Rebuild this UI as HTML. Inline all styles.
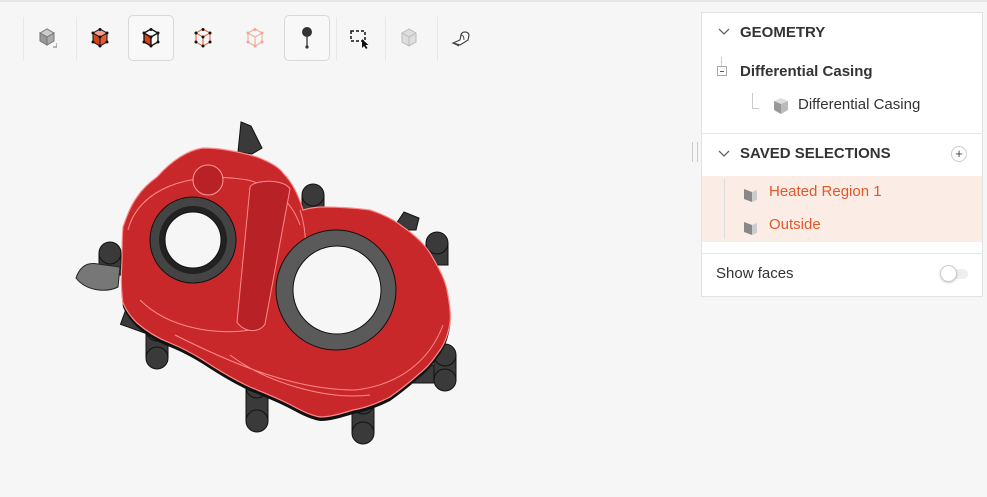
<!DOCTYPE html>
<html><head><meta charset="utf-8"><style>
body{margin:0;width:987px;height:497px;background:#f6f6f6;font-family:"Liberation Sans",sans-serif;overflow:hidden;position:relative}
.top{position:absolute;left:0;top:0;width:987px;height:2px;background:#e6e6e6}
.tb{position:absolute;top:15px;height:46px;width:46px;display:flex;align-items:center;justify-content:center}
.sel{border:1px solid #d8d8d8;border-radius:5px;background:#f8f8f8;width:44px;height:44px}
.sep{position:absolute;top:17px;width:1px;height:44px;background:#e8e8e8}
.panel{position:absolute;left:701px;top:12px;width:280px;height:283px;background:#fff;border:1px solid #e2e2e2}
.h{position:absolute;font-weight:bold;font-size:15px;color:#333}
.t{position:absolute;font-size:15px;color:#333}
.o{color:#e2572b}
</style></head><body>
<div class="top"></div>
<div class="sep" style="left:23px"></div><div class="sep" style="left:76px"></div><div class="sep" style="left:336px"></div><div class="sep" style="left:385px"></div><div class="sep" style="left:437px"></div>
<div class="tb" style="left:24px"><svg width="20" height="22" viewBox="0 0 20 22"><path d="M3 6l7-4 7 4-7 4z" fill="#ccc" stroke="#777"/><path d="M3 6v8l7 4v-8z" fill="#999" stroke="#777"/><path d="M17 6v8l-7 4v-8z" fill="#aaa" stroke="#777"/><path d="M16 20h4v-4" fill="none" stroke="#777"/></svg></div>
<div class="tb" style="left:77px"><svg width="20" height="20" viewBox="0 0 20 20"><path d="M3 5l7-4 7 4-7 4z" fill="#f0a090"/><path d="M3 5v9l7 4V9z" fill="#d4441c"/><path d="M17 5v9l-7 4V9z" fill="#e25a3a"/><g fill="#111"><circle cx="3" cy="5" r="1.5"/><circle cx="10" cy="1.5" r="1.5"/><circle cx="17" cy="5" r="1.5"/><circle cx="10" cy="9" r="1.5"/><circle cx="3" cy="14" r="1.5"/><circle cx="17" cy="14" r="1.5"/><circle cx="10" cy="18" r="1.5"/></g><path d="M3 5l7-4 7 4v9l-7 4-7-4z M3 5l7 4 7-4 M10 9v9" fill="none" stroke="#111"/></svg></div>
<div class="tb sel" style="left:128px"><svg width="20" height="20" viewBox="0 0 20 20"><path d="M3 5v9l7 4V9z" fill="#d4441c"/><path d="M3 5l7-4 7 4v9l-7 4-7-4z M3 5l7 4 7-4 M10 9v9" fill="none" stroke="#111" stroke-width="1.3"/><g fill="#111"><circle cx="3" cy="5" r="1.5"/><circle cx="10" cy="1.5" r="1.5"/><circle cx="17" cy="5" r="1.5"/><circle cx="10" cy="9" r="1.5"/><circle cx="3" cy="14" r="1.5"/><circle cx="17" cy="14" r="1.5"/><circle cx="10" cy="18" r="1.5"/></g></svg></div>
<div class="tb" style="left:180px"><svg width="20" height="20" viewBox="0 0 20 20"><path d="M3 5l7-4 7 4v9l-7 4-7-4z M3 5l7 4 7-4 M10 9v9" fill="none" stroke="#e2572b"/><g fill="#111"><circle cx="3" cy="5" r="1.5"/><circle cx="10" cy="1.5" r="1.5"/><circle cx="17" cy="5" r="1.5"/><circle cx="10" cy="9" r="1.5"/><circle cx="3" cy="14" r="1.5"/><circle cx="17" cy="14" r="1.5"/><circle cx="10" cy="18" r="1.5"/></g></svg></div>
<div class="tb" style="left:232px"><svg width="20" height="20" viewBox="0 0 20 20"><path d="M3 5l7-4 7 4v9l-7 4-7-4z M3 5l7 4 7-4 M10 9v9" fill="none" stroke="#eaa590"/><g fill="#f0a890"><circle cx="3" cy="5" r="1.5"/><circle cx="10" cy="1.5" r="1.5"/><circle cx="17" cy="5" r="1.5"/><circle cx="3" cy="14" r="1.5"/><circle cx="17" cy="14" r="1.5"/><circle cx="10" cy="18" r="1.5"/></g></svg></div>
<div class="tb sel" style="left:284px"><svg width="14" height="24" viewBox="0 0 14 24"><circle cx="7" cy="6" r="5" fill="#333"/><path d="M7 11v10" stroke="#333" stroke-width="1.3"/><circle cx="7" cy="21" r="1.6" fill="#333"/></svg></div>
<div class="tb" style="left:337px"><svg width="22" height="22" viewBox="0 0 22 22"><rect x="2" y="4" width="14" height="10" fill="none" stroke="#111" stroke-width="1.5" stroke-dasharray="3 2"/><path d="M13 12l0 9 2-2 2 3 1.5-1-2-3 3 0z" fill="#111"/></svg></div>
<div class="tb" style="left:386px"><svg width="20" height="20" viewBox="0 0 20 20"><path d="M3 5l7-4 7 4v9l-7 4-7-4z" fill="#ddd" stroke="#bbb"/><path d="M3 5l7 4 7-4M10 9v9" fill="none" stroke="#bbb"/></svg></div>
<div class="tb" style="left:438px"><svg width="22" height="20" viewBox="0 0 22 20"><path d="M3 15l7-3 1-5c1-4 7-4 8 0l-1 5-8 5z" fill="#fff" stroke="#444" stroke-width="1.2"/><path d="M11 7c2 0 3 2 3 5M3 15l6 3" fill="none" stroke="#444"/></svg></div>

<svg style="position:absolute;left:0;top:0" width="690" height="497">
<g fill="#3a3a3a" stroke="#111">
<path d="M238 152l3-30 10 4 11 22-10 6z"/>
<path d="M396 224l8-12 15 6-3 12-18 0z"/>
<rect x="123" y="310" width="30" height="20" transform="rotate(20 138 320)"/>
<rect x="408" y="365" width="30" height="18"/>
<g><rect x="99" y="253" width="22" height="22"/><circle cx="110" cy="253" r="11"/></g>
<g><rect x="302" y="195" width="22" height="16"/><circle cx="313" cy="195" r="11"/></g>
<g><rect x="426" y="243" width="22" height="22"/><circle cx="437" cy="243" r="11"/></g>
<g><rect x="146" y="330" width="22" height="28"/><circle cx="157" cy="358" r="11"/><circle cx="157" cy="330" r="11"/></g>
<g><rect x="434" y="355" width="22" height="25"/><circle cx="445" cy="380" r="11"/><circle cx="445" cy="355" r="11"/></g>
<g><rect x="246" y="387" width="22" height="34"/><circle cx="257" cy="421" r="11"/><circle cx="257" cy="387" r="11"/></g>
<g><rect x="352" y="403" width="22" height="30"/><circle cx="363" cy="433" r="11"/><circle cx="363" cy="403" r="11"/></g>
</g>
<path d="M76 278c4-12 12-16 22-14l22 3-2 20c-12 6-32 4-42-9z" fill="#777" stroke="#222"/>
<path d="M203 148C220 148 240 152 257 157C270 162 280 168 283 173C290 180 297 190 303 210C310 208 318 207 323 207C340 207 355 208 370 210C385 215 395 220 403 227C415 235 425 245 430 253C440 270 445 280 447 290C450 305 451 315 450 323C448 335 445 343 440 350C433 360 428 367 420 373C410 382 400 390 390 397C378 403 365 408 353 410C340 414 330 417 320 417C308 415 297 408 287 403C275 397 262 392 250 387C235 380 218 370 203 360C190 352 180 347 170 343C155 337 145 330 137 323C130 316 126 310 123 303C121 290 121 275 122 260C122 248 122 237 123 227C127 215 131 205 137 197C143 188 150 182 157 177C165 168 172 162 180 157C188 152 195 149 203 148Z" fill="#111" transform="translate(0,4)"/>
<path d="M203 148C220 148 240 152 257 157C270 162 280 168 283 173C290 180 297 190 303 210C310 208 318 207 323 207C340 207 355 208 370 210C385 215 395 220 403 227C415 235 425 245 430 253C440 270 445 280 447 290C450 305 451 315 450 323C448 335 445 343 440 350C433 360 428 367 420 373C410 382 400 390 390 397C378 403 365 408 353 410C340 414 330 417 320 417C308 415 297 408 287 403C275 397 262 392 250 387C235 380 218 370 203 360C190 352 180 347 170 343C155 337 145 330 137 323C130 316 126 310 123 303C121 290 121 275 122 260C122 248 122 237 123 227C127 215 131 205 137 197C143 188 150 182 157 177C165 168 172 162 180 157C188 152 195 149 203 148Z" fill="#c9282b" stroke="#ff8a8a" stroke-width="1.2"/>
<path d="M128 230c10-40 60-60 120-50 30 8 45 25 52 45M140 300c30 30 80 35 110 30M175 335c60 30 120 55 180 55 45-5 75-30 88-65M230 355c40 30 100 45 140 40M300 210c10 30 5 60 -5 90" fill="none" stroke="#ff8a8a" stroke-width="1"/>
<circle cx="208" cy="180" r="15" fill="#b82226" stroke="#ff9a9a"/>
<circle cx="193" cy="240" r="43" fill="#444" stroke="#111"/><circle cx="193" cy="240" r="34" fill="#222"/><circle cx="193" cy="240" r="28" fill="#f6f6f6" stroke="#111"/>
<circle cx="336" cy="290" r="60" fill="#5a5a5a" stroke="#111"/>
<circle cx="337" cy="290" r="44" fill="#f6f6f6" stroke="#111"/>
<path d="M250 187c5-8 35-8 40 2l-25 135c-6 10-22 8-28-2z" fill="#b82226" stroke="#ff8a8a"/>
</svg>

<div style="position:absolute;left:692px;top:142px;width:4px;height:20px;border-left:1px solid #ccc;border-right:1px solid #ccc"></div>
<div class="panel">
<svg style="position:absolute;left:16px;top:15px" width="12" height="8"><path d="M1 1l5 5 5-5" fill="none" stroke="#666" stroke-width="1.3"/></svg>
<div class="h" style="left:38px;top:11px">GEOMETRY</div>
<div style="position:absolute;left:19px;top:44px;width:1px;height:10px;background:#ccc"></div>
<div style="position:absolute;left:15px;top:53px;width:10px;height:10px;border:1px solid #aaa;box-sizing:border-box"><div style="position:absolute;left:2px;top:4px;width:4px;height:1px;background:#555"></div></div>
<div class="h" style="left:38px;top:50px">Differential Casing</div>
<div style="position:absolute;left:50px;top:80px;width:6px;height:15px;border-left:1px solid #ccc;border-bottom:1px solid #ccc"></div>
<svg style="position:absolute;left:70px;top:84px" width="18" height="18"><path d="M2 4l7-3 7 3-7 3z" fill="#ddd"/><path d="M2 4v9l7 4V7z" fill="#999"/><path d="M16 4v9l-7 4V7z" fill="#bbb"/></svg>
<div class="t" style="left:96px;top:83px">Differential Casing</div>
<div style="position:absolute;left:0;top:120px;width:280px;height:1px;background:#e6e6e6"></div>
<svg style="position:absolute;left:16px;top:137px" width="12" height="8"><path d="M1 1l5 5 5-5" fill="none" stroke="#666" stroke-width="1.3"/></svg>
<div class="h" style="left:38px;top:132px">SAVED SELECTIONS</div>
<div style="position:absolute;left:249px;top:133px;width:16px;height:16px;border:1px solid #ccc;border-radius:50%;box-sizing:border-box;font-size:13px;line-height:13px;text-align:center;color:#444">+</div>
<div style="position:absolute;left:0;top:163px;width:280px;height:66px;background:#fbece5"></div>
<div style="position:absolute;left:22px;top:166px;width:5px;height:60px;border-left:1px solid #ddd"></div>
<svg style="position:absolute;left:40px;top:173px" width="18" height="18"><path d="M2 3l8 3v10l-8-3z" fill="#888"/><path d="M10 6l5-2v10l-5 2z" fill="#ccc"/></svg>
<div class="t o" style="left:67px;top:170px">Heated Region 1</div>
<svg style="position:absolute;left:40px;top:206px" width="18" height="18"><path d="M2 3l8 3v10l-8-3z" fill="#888"/><path d="M10 6l5-2v10l-5 2z" fill="#ccc"/></svg>
<div class="t o" style="left:67px;top:203px">Outside</div>
<div style="position:absolute;left:0;top:240px;width:280px;height:1px;background:#e6e6e6"></div>
<div class="t" style="left:14px;top:252px">Show faces</div>
<div style="position:absolute;left:248px;top:256px;width:18px;height:10px;background:#eee;border-radius:5px"></div>
<div style="position:absolute;left:238px;top:252px;width:17px;height:17px;background:#fff;border:1px solid #ccc;border-radius:50%;box-sizing:border-box;box-shadow:0 1px 2px rgba(0,0,0,.2)"></div>
</div>
</body></html>
